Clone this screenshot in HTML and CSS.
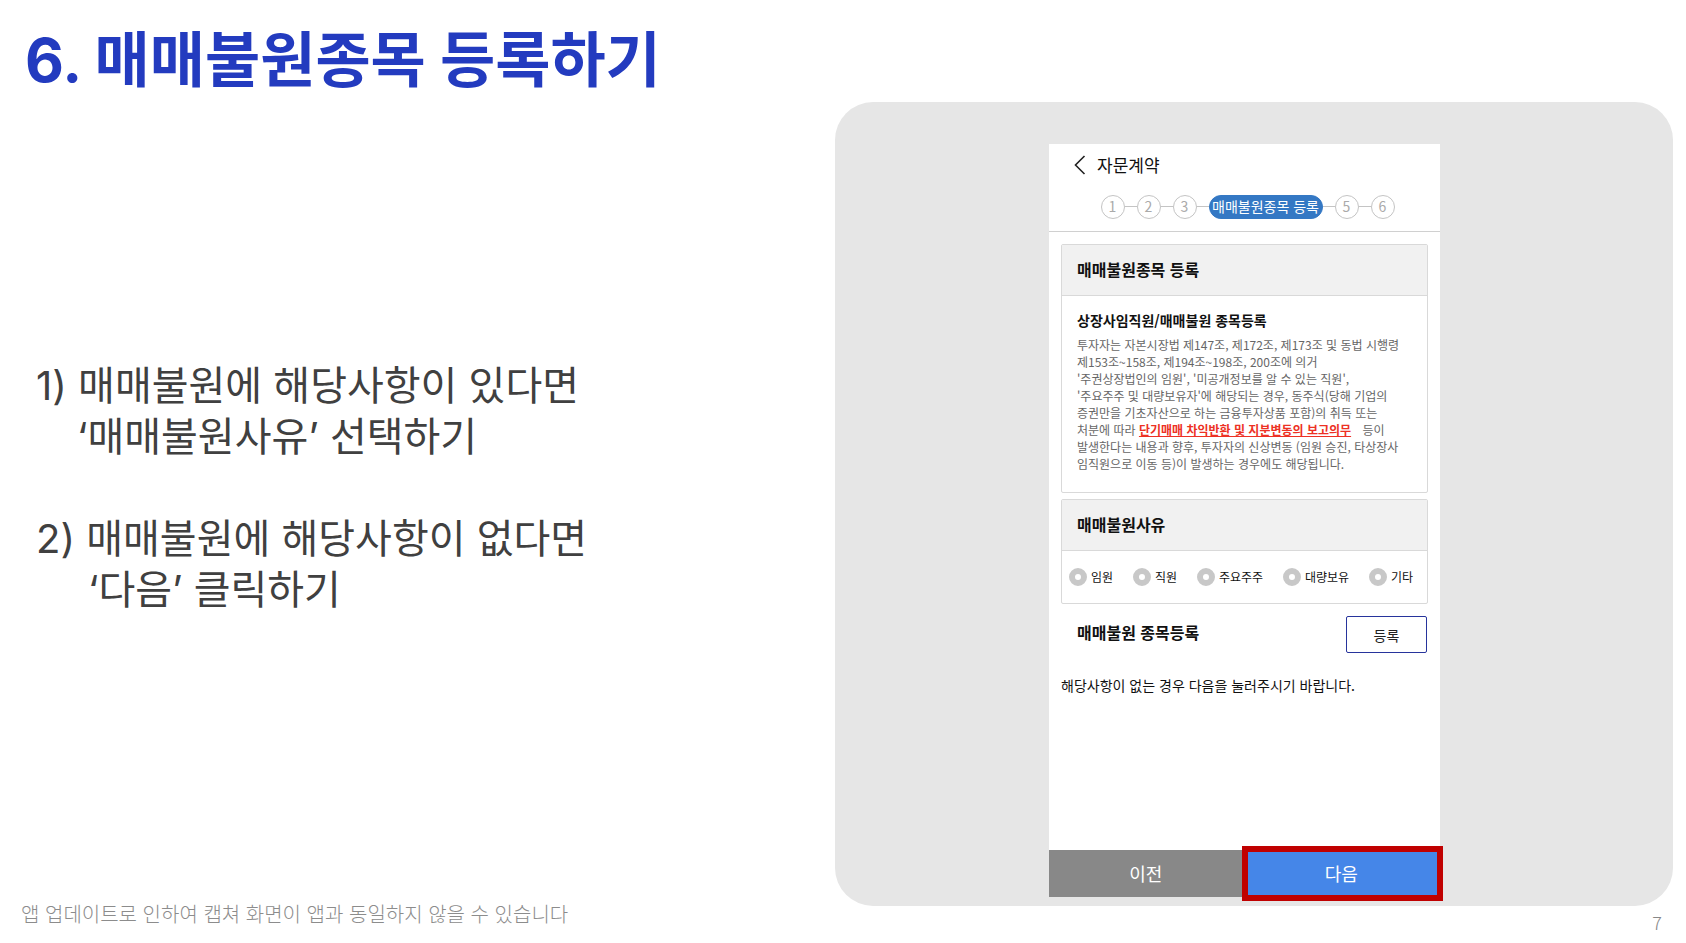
FILE: index.html
```
<!DOCTYPE html>
<html lang="ko">
<head>
    <meta charset="UTF-8">
    <meta name="viewport" content="width=device-width, initial-scale=1.0">
    <title>매매불원종목 등록하기</title>
    <link rel="stylesheet" href="styles.css">
</head>
<body>
    <main class="slide">
        <section class="guide">
            <h1 class="guide-title">6. 매매불원종목 등록하기</h1>
            <div class="guide-text">
                <p>1) 매매불원에 해당사항이 있다면<br><span class="indent-one">‘매매불원사유’ 선택하기</span></p>
                <p>2) 매매불원에 해당사항이 없다면<br><span class="indent-two">‘다음’ 클릭하기</span></p>
            </div>
            <p class="notice">앱 업데이트로 인하여 캡쳐 화면이 앱과 동일하지 않을 수 있습니다</p>
        </section>
        <section class="preview">
            <div class="panel">
                <div class="phone">
                    <header class="phone-header">
                        <div class="nav">
                            <button class="back" aria-label="뒤로">
                                <svg width="12" height="20" viewBox="0 0 12 20"><path d="M10.5 1 1.5 10l9 9" fill="none" stroke="#222" stroke-width="1.6"/></svg>
                            </button>
                            <span>자문계약</span>
                        </div>
                        <ol class="steps">
                            <li>1</li>
                            <li>2</li>
                            <li>3</li>
                            <li class="current">매매불원종목 등록</li>
                            <li>5</li>
                            <li>6</li>
                        </ol>
                    </header>
                    <div class="content">
                        <section class="card">
                            <h2 class="card-title">매매불원종목 등록</h2>
                            <div class="card-body">
                                <h3>상장사임직원/매매불원 종목등록</h3>
                                <p>투자자는 자본시장법 제147조, 제172조, 제173조 및 동법 시행령<br>
                                제153조~158조, 제194조~198조, 200조에 의거<br>
                                '주권상장법인의 임원', '미공개정보를 알 수 있는 직원',<br>
                                '주요주주 및 대량보유자'에 해당되는 경우, 동주식(당해 기업의<br>
                                증권만을 기초자산으로 하는 금융투자상품 포함)의 취득 또는<br>
                                처분에 따라 <strong>단기매매 차익반환 및 지분변동의 보고의무</strong> 등이<br>
                                발생한다는 내용과 향후, 투자자의 신상변동 (임원 승진, 타상장사<br>
                                임직원으로 이동 등)이 발생하는 경우에도 해당됩니다.</p>
                            </div>
                        </section>
                        <section class="card">
                            <h2 class="card-title">매매불원사유</h2>
                            <div class="reasons">
                                <label><input type="radio" name="reason">임원</label>
                                <label><input type="radio" name="reason">직원</label>
                                <label><input type="radio" name="reason">주요주주</label>
                                <label><input type="radio" name="reason">대량보유</label>
                                <label><input type="radio" name="reason">기타</label>
                            </div>
                        </section>
                        <div class="register">
                            <h2>매매불원 종목등록</h2>
                            <button class="register-button">등록</button>
                        </div>
                        <p class="hint">해당사항이 없는 경우 다음을 눌러주시기 바랍니다.</p>
                    </div>
                    <footer class="actions">
                        <button class="prev">이전</button>
                        <button class="next">다음</button>
                    </footer>
                </div>
            </div>
            <span class="page-number">7</span>
        </section>
    </main>
</body>
</html>
```
FILE: styles.css
```
* { box-sizing: border-box; }
body { margin: 0; background: #fff; color: #404040; font-family: Inter, "Noto Sans CJK KR", sans-serif; }
h1, h2, h3, p, ol { margin: 0; padding: 0; }
button { margin: 0; padding: 0; border: none; font-family: inherit; cursor: pointer; }

.slide { display: grid; grid-template-columns: 835fr 838fr; min-height: 100vh; padding-right: 13px; }

.guide { display: flex; flex-direction: column; padding: 16px 0 14px 21px; }
.guide-title { padding-left: 4px; color: #233bbf; font-size: 60px; line-height: 88px; font-weight: 700; }
.guide-text { display: flex; flex-direction: column; gap: 51px; margin: auto 0; padding: 0 0 28px 15px; font-size: 40px; line-height: 51px; }
.indent-one { padding-left: 41px; }
.indent-two { padding-left: 52px; }
.notice { color: #8c8c8c; font-size: 20px; line-height: 30px; font-family: "Noto Sans CJK KR", sans-serif; font-weight: 300; }

.preview { display: flex; flex-direction: column; padding-top: 102px; }
.panel { flex: 1; display: flex; justify-content: center; padding: 42px 19px 9px 0; background: #e6e6e6; border-radius: 38px; }
.page-number { align-self: flex-end; height: 37px; padding-right: 11px; color: #888; font-size: 18px; line-height: 32px; font-family: "Noto Sans CJK KR", sans-serif; font-weight: 300; }

.phone { display: flex; flex-direction: column; width: 391px; background: #fff; color: #111; font-family: "Noto Sans CJK KR", sans-serif; }
.phone-header { padding: 9px 0 12px; border-bottom: 1px solid #d0d0d0; }
.nav { display: flex; align-items: center; gap: 11px; padding-left: 25px; font-size: 17px; line-height: 24px; }
.back { display: flex; background: none; }
.steps { display: flex; justify-content: center; gap: 12px; margin-top: 18px; padding-left: 6px; list-style: none; }
.steps li { position: relative; width: 24px; height: 24px; border: 1px solid #c4c4c4; border-radius: 12px; color: #aaa; font-size: 14px; line-height: 20px; text-align: center; }
.steps li + li::before { content: ""; position: absolute; right: 100%; top: 10px; width: 12px; margin-right: 1px; border-top: 1px solid #c4c4c4; }
.steps .current { width: 114px; border-color: #3478c4; background: #3478c4; color: #fff; white-space: nowrap; }

.content { flex: 1; padding: 12px; }
.card { margin-bottom: 6px; border: 1px solid #d9d9d9; border-radius: 2px; }
.card-title { padding: 0 15px 2px; border-bottom: 1px solid #d9d9d9; background: #f1f1f1; font-size: 16px; line-height: 48px; }
.card-body { padding: 14px 0 20px 15px; }
.card-body h3 { margin-bottom: 6px; font-size: 14px; line-height: 20px; }
.card-body p { color: #666; font-size: 12px; line-height: 17px; white-space: nowrap; }
.card-body strong { margin-right: 8px; color: #ed3124; text-decoration: underline; }
.reasons { display: flex; justify-content: space-between; padding: 17px 14px 17px 7px; }
.reasons label { display: flex; align-items: center; gap: 4px; font-size: 12px; line-height: 18px; }
.reasons input { appearance: none; width: 18px; height: 18px; margin: 0; border: 6px solid #c8c8c8; border-radius: 50%; background: #fff; }
.register { display: flex; justify-content: space-between; margin-top: 12px; padding: 0 1px 0 16px; }
.register h2 { font-size: 16px; line-height: 32px; }
.register-button { width: 81px; height: 37px; border: 1px solid #27349c; border-radius: 2px; background: #fff; color: #222; font-size: 14px; }
.hint { margin-top: 22px; font-size: 14px; line-height: 20px; }

.actions { display: grid; grid-template-columns: 1fr 1fr; height: 47px; }
.actions button { padding: 0 2px 2px 0; color: #fff; font-size: 18px; }
.prev { background: #888; }
.next { position: relative; background: #4586e8; }
.next::after { content: ""; position: absolute; inset: -4px -3px; border: 6px solid #c00000; }
```
